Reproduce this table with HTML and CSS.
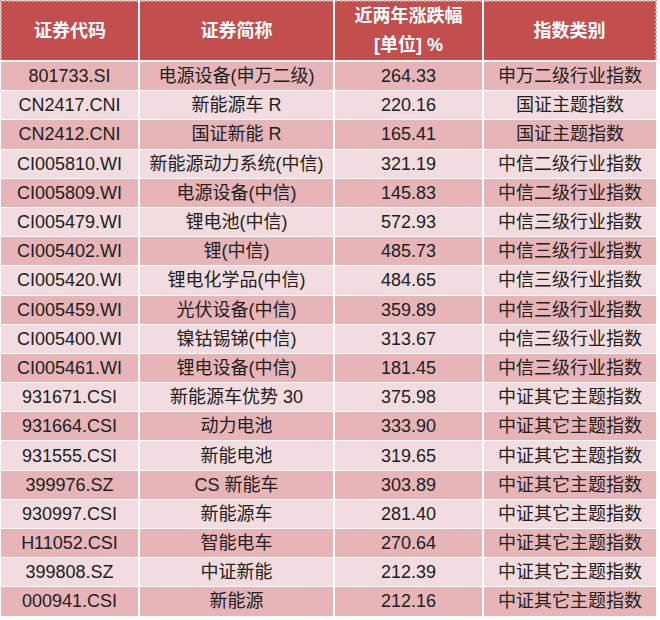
FILE: index.html
```html
<!DOCTYPE html>
<html lang="zh-CN">
<head>
<meta charset="utf-8">
<link rel="stylesheet" href="styles.css">
</head>
<body>
<table class="tbl">
  <colgroup>
    <col class="c1"><col class="c2"><col class="c3"><col class="c4">
  </colgroup>
  <thead>
    <tr>
      <th class="first">证券代码</th>
      <th>证券简称</th>
      <th class="two">近两年涨跌幅<br>[单位] %</th>
      <th class="last">指数类别</th>
    </tr>
  </thead>
  <tbody>
    <tr><td>801733.SI</td><td>电源设备(申万二级)</td><td>264.33</td><td>申万二级行业指数</td></tr>
    <tr><td>CN2417.CNI</td><td>新能源车 R</td><td>220.16</td><td>国证主题指数</td></tr>
    <tr><td>CN2412.CNI</td><td>国证新能 R</td><td>165.41</td><td>国证主题指数</td></tr>
    <tr><td>CI005810.WI</td><td>新能源动力系统(中信)</td><td>321.19</td><td>中信二级行业指数</td></tr>
    <tr><td>CI005809.WI</td><td>电源设备(中信)</td><td>145.83</td><td>中信二级行业指数</td></tr>
    <tr><td>CI005479.WI</td><td>锂电池(中信)</td><td>572.93</td><td>中信三级行业指数</td></tr>
    <tr><td>CI005402.WI</td><td>锂(中信)</td><td>485.73</td><td>中信三级行业指数</td></tr>
    <tr><td>CI005420.WI</td><td>锂电化学品(中信)</td><td>484.65</td><td>中信三级行业指数</td></tr>
    <tr><td>CI005459.WI</td><td>光伏设备(中信)</td><td>359.89</td><td>中信三级行业指数</td></tr>
    <tr><td>CI005400.WI</td><td>镍钴锡锑(中信)</td><td>313.67</td><td>中信三级行业指数</td></tr>
    <tr><td>CI005461.WI</td><td>锂电设备(中信)</td><td>181.45</td><td>中信三级行业指数</td></tr>
    <tr><td>931671.CSI</td><td>新能源车优势 30</td><td>375.98</td><td>中证其它主题指数</td></tr>
    <tr><td>931664.CSI</td><td>动力电池</td><td>333.90</td><td>中证其它主题指数</td></tr>
    <tr><td>931555.CSI</td><td>新能电池</td><td>319.65</td><td>中证其它主题指数</td></tr>
    <tr><td>399976.SZ</td><td>CS 新能车</td><td>303.89</td><td>中证其它主题指数</td></tr>
    <tr><td>930997.CSI</td><td>新能源车</td><td>281.40</td><td>中证其它主题指数</td></tr>
    <tr><td>H11052.CSI</td><td>智能电车</td><td>270.64</td><td>中证其它主题指数</td></tr>
    <tr><td>399808.SZ</td><td>中证新能</td><td>212.39</td><td>中证其它主题指数</td></tr>
    <tr><td>000941.CSI</td><td>新能源</td><td>212.16</td><td>中证其它主题指数</td></tr>
  </tbody>
</table>
</body>
</html>
```
FILE: styles.css
```css
html, body {
  margin: 0;
  padding: 0;
  background: #ffffff;
}
body {
  font-family: "Liberation Sans", "Noto Sans CJK SC", sans-serif;
  color: #202020;
}
.tbl {
  width: 655px;
  border-collapse: collapse;
  table-layout: fixed;
}
.c1 { width: 138px; }
.c2 { width: 195px; }
.c3 { width: 149px; }
.c4 { width: 173px; }

.tbl th {
  height: 58px;
  padding: 0;
  background: #c24e4e;
  color: #ffffff;
  font-size: 18px;
  font-weight: bold;
  text-align: center;
  vertical-align: middle;
  border-left: 2px solid #ffffff;
  border-right: 2px solid #ffffff;
  border-top: 2px dotted #dba3a3;
  border-bottom: 2px solid #ffffff;
  line-height: 29px;
}
.tbl th.first { border-left: 2px dotted #dba3a3; }
.tbl th.last { border-right: 2px dotted #dba3a3; }

.tbl td {
  height: 28.2px;
  padding: 0;
  font-size: 18px;
  text-align: center;
  vertical-align: middle;
  white-space: nowrap;
  border-left: 2px solid #ffffff;
  border-right: 2px solid #ffffff;
  border-bottom: 1px solid #ffffff;
  line-height: 26px;
}
.tbl td:first-child { border-left: 0; }
.tbl td:last-child { border-right: 0; }
.tbl tbody tr:nth-child(odd) td { background: #e7b5b8; }
.tbl tbody tr:nth-child(even) td { background: #f3dcdf; }
```
